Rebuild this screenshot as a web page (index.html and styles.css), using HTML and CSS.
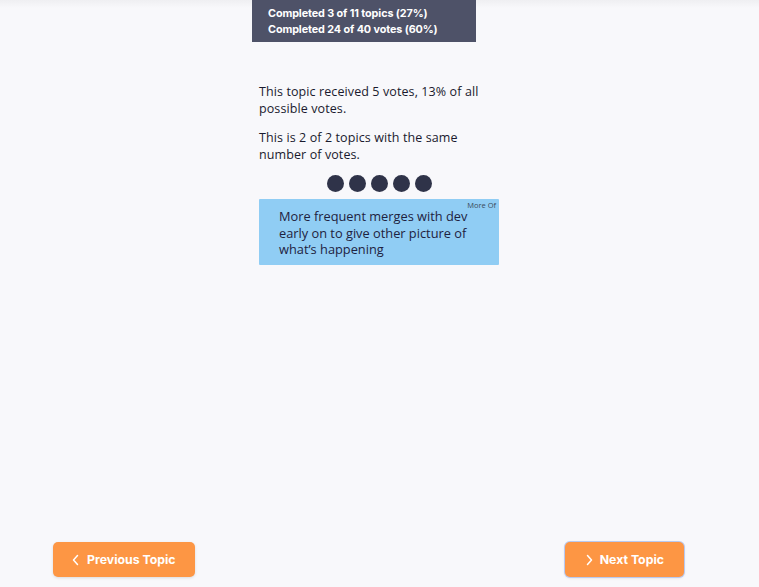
FILE: index.html
```
<!DOCTYPE html>
<html>
<head>
<meta charset="utf-8">
<link rel="stylesheet" href="styles.css">
</head>
<body>
<div class="page">
  <div class="progress">
    <div>Completed 3 of 11 topics (27%)</div>
    <div>Completed 24 of 40 votes (60%)</div>
  </div>
  <main class="column">
    <p class="info">This topic received 5 votes, 13% of all possible votes.</p>
    <p class="info">This is 2 of 2 topics with the same number of votes.</p>
    <div class="dots">
      <span class="dot"></span><span class="dot"></span><span class="dot"></span><span class="dot"></span><span class="dot"></span>
    </div>
    <div class="card">
      <span class="tag">More Of</span>
      <div class="card-text">More frequent merges with dev early on to give other picture of what’s happening</div>
    </div>
  </main>
  <div class="spacer"></div>
  <nav class="nav">
    <button class="btn"><svg width="10" height="12" viewBox="0 0 10 12"><path d="M6.5 1.5 L2.5 6 L6.5 10.5" fill="none" stroke="#fff" stroke-width="1.5" stroke-linecap="round" stroke-linejoin="round"/></svg>Previous Topic</button>
    <button class="btn btn-next"><svg width="10" height="12" viewBox="0 0 10 12"><path d="M3.5 1.5 L7.5 6 L3.5 10.5" fill="none" stroke="#fff" stroke-width="1.5" stroke-linecap="round" stroke-linejoin="round"/></svg>Next Topic</button>
  </nav>
</div>
</body>
</html>
```
FILE: styles.css
```
html, body {
  margin: 0;
  padding: 0;
  background: #f8f8fb;
}
.page {
  min-height: 100vh;
  display: flex;
  flex-direction: column;
  background: linear-gradient(#efeff2, #f8f8fb 8px);
}
.progress {
  margin-left: 252px;
  width: 224px;
  height: 42px;
  box-sizing: border-box;
  padding: 6px 0 0 16px;
  background: #4e5268;
  color: #fff;
  font-family: Inter, "Open Sans", sans-serif;
  font-weight: 700;
  font-size: 10.8px;
  line-height: 16px;
  letter-spacing: -0.1px;
}
.column {
  width: 240px;
  margin: 41px auto 0;
  padding-right: 1px;
  font-family: "Open Sans", sans-serif;
  color: #1a1a2e;
}
.info {
  margin: 0 0 12px;
  font-size: 12.5px;
  line-height: 17px;
  letter-spacing: 0.1px;
}
.dots {
  display: flex;
  justify-content: center;
  gap: 5px;
  margin-top: 0;
}
.dot {
  width: 17px;
  height: 17px;
  border-radius: 50%;
  background: #2f3349;
}
.card {
  position: relative;
  margin-top: 7px;
  height: 66px;
  box-sizing: border-box;
  padding: 9px 20px 0 20px;
  background: #90cdf4;
  border-radius: 1px;
}
.tag {
  position: absolute;
  top: 1px;
  right: 3px;
  font-size: 7.5px;
  color: #3a4a5a;
}
.card-text {
  font-size: 12.8px;
  line-height: 16.5px;
  color: #1e2240;
}
.spacer {
  flex: 1;
}
.nav {
  display: flex;
  justify-content: space-between;
  padding: 0 75px 10px 53px;
}
.btn {
  display: flex;
  align-items: center;
  gap: 6px;
  height: 35px;
  padding: 0 19px 0 18px;
  border: none;
  border-radius: 5px;
  background: #fd9644;
  color: #fff;
  font-family: Inter, sans-serif;
  font-weight: 700;
  font-size: 12.3px;
  box-shadow: 0 1px 3px rgba(0,0,0,0.12);
}
.btn-next {
  padding: 0 20px 0 19px;
  box-shadow: 0 0 0 1px #b9c9f0, 0 1px 3px rgba(0,0,0,0.12);
}
```
